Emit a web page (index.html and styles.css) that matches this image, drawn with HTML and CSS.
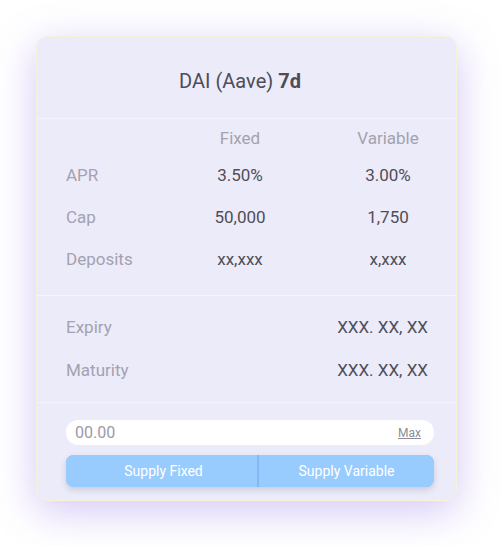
FILE: index.html
```html
<!DOCTYPE html>
<html lang="en">
<head>
<meta charset="utf-8">
<title>DAI (Aave) 7d</title>
<link rel="stylesheet" href="styles.css">
</head>
<body>
<div class="page">
  <div class="card">
    <div class="title-section">
      <h1 class="title">DAI (Aave) <strong>7d</strong></h1>
    </div>
    <div class="rates">
      <div class="row head">
        <span></span>
        <span class="col">Fixed</span>
        <span class="col">Variable</span>
      </div>
      <div class="row">
        <span class="label">APR</span>
        <span class="col value">3.50%</span>
        <span class="col value">3.00%</span>
      </div>
      <div class="row">
        <span class="label">Cap</span>
        <span class="col value">50,000</span>
        <span class="col value">1,750</span>
      </div>
      <div class="row">
        <span class="label">Deposits</span>
        <span class="col value">xx,xxx</span>
        <span class="col value">x,xxx</span>
      </div>
    </div>
    <div class="dates">
      <div class="date-row">
        <span class="label">Expiry</span>
        <span class="value">XXX. XX, XX</span>
      </div>
      <div class="date-row">
        <span class="label">Maturity</span>
        <span class="value">XXX. XX, XX</span>
      </div>
    </div>
    <div class="actions">
      <div class="amount">
        <input class="amount-input" type="text" placeholder="00.00">
        <a class="max" href="#">Max</a>
      </div>
      <div class="buttons">
        <button class="btn btn-fixed">Supply Fixed</button>
        <button class="btn btn-variable">Supply Variable</button>
      </div>
    </div>
  </div>
</div>
</body>
</html>
```

FILE: styles.css
```css
* { box-sizing: border-box; }

html, body {
  margin: 0;
  padding: 0;
  background: #ffffff;
  font-family: Roboto, "Liberation Sans", sans-serif;
}

.page {
  padding: 36px 44px 45px 36px;
}

.card {
  width: 421px;
  height: 465px;
  background: #ecebf9;
  border: 1px solid #f6f3da;
  border-radius: 11px;
  box-shadow: 0 10px 40px rgba(160, 130, 235, 0.45);
  display: flex;
  flex-direction: column;
}

.title-section {
  height: 82px;
  padding: 6px 13px 0 0;
  display: flex;
  align-items: center;
  justify-content: center;
  border-bottom: 1px solid #f5f4fc;
}

.title {
  margin: 0;
  font-size: 20px;
  font-weight: 400;
  color: #4d4c57;
}

.title strong {
  font-weight: 700;
}

.rates {
  padding: 3px 18px 15px 29px;
  border-bottom: 1px solid #f5f4fc;
}

.row {
  display: grid;
  grid-template-columns: 1fr 100px 100px;
  column-gap: 48px;
  align-items: center;
  height: 42px;
  font-size: 17px;
}

.row.head {
  height: 32px;
}

.row.head .col {
  color: #a3a2b0;
}

.col {
  text-align: center;
}

.label {
  color: #a3a2b0;
  font-size: 17px;
}

.value {
  color: #4f4e58;
  font-size: 17px;
}

.dates {
  padding: 9px 28px 11px 29px;
  border-bottom: 1px solid #f5f4fc;
}

.date-row {
  display: flex;
  justify-content: space-between;
  align-items: center;
  height: 43px;
}

.actions {
  padding: 17px 22px 0 29px;
  display: flex;
  flex-direction: column;
  gap: 10px;
}

.amount {
  height: 25px;
  background: #ffffff;
  border-radius: 12px;
  display: flex;
  align-items: center;
  padding: 0 13px 0 9px;
}

.amount-input {
  flex: 1;
  border: none;
  outline: none;
  background: transparent;
  padding: 0;
  font-family: inherit;
  font-size: 16px;
  color: #4f4e58;
}

.amount-input::placeholder {
  color: #9b9aa6;
}

.max {
  font-size: 12px;
  color: #8d8c98;
  text-decoration: underline;
}

.buttons {
  display: grid;
  grid-template-columns: 191px 2px 1fr;
  height: 32px;
  border-radius: 8px;
  overflow: hidden;
  background: #80b9f4;
  box-shadow: 0 3px 6px rgba(60, 60, 90, 0.18);
}

.btn {
  border: none;
  background: #99ccfe;
  color: #ffffff;
  font-family: inherit;
  font-size: 14px;
  padding: 0;
  cursor: pointer;
}

.btn-fixed {
  grid-column: 1;
  padding-left: 4px;
}

.btn-variable {
  grid-column: 3;
}
```
